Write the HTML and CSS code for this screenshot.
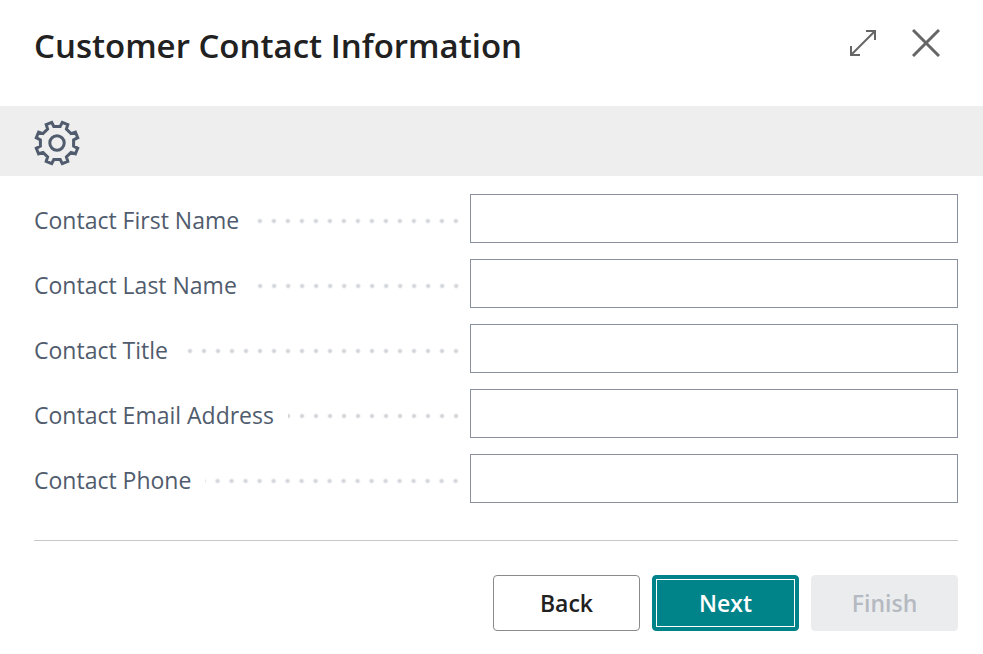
FILE: index.html
```html
<!DOCTYPE html>
<html lang="en">
    <head>
        <meta charset="UTF-8">
        <title>Customer Contact Information</title>
        <link rel="stylesheet" href="styles.css">
    </head>
    <body>
        <header>
            <h1>Customer Contact Information</h1>
            <div class="window-buttons">
                <button type="button" class="icon-button" aria-label="Expand">
                    <svg width="28" height="28" viewBox="0 0 28 28"><path d="M2 26L26 2M17 2H26V11M2 17V26H11"/></svg>
                </button>
                <button type="button" class="icon-button close" aria-label="Close">
                    <svg width="28" height="28" viewBox="0 0 28 28"><path d="M1 1L27 27M27 1L1 27"/></svg>
                </button>
            </div>
        </header>
        <div class="banner">
            <svg class="gear" width="46" height="46" viewBox="-23 -23 46 46">
                <path d="M3.2-16.6L5.3-20.7L10.8-18.4L9.4-14L14-9.4L18.4-10.8L20.7-5.3L16.6-3.2V3.2L20.7 5.3L18.4 10.8L14 9.4L9.4 14L10.8 18.4L5.3 20.7L3.2 16.6H-3.2L-5.3 20.7L-10.8 18.4L-9.4 14L-14 9.4L-18.4 10.8L-20.7 5.3L-16.6 3.2V-3.2L-20.7-5.3L-18.4-10.8L-14-9.4L-9.4-14L-10.8-18.4L-5.3-20.7L-3.2-16.6Z"/>
                <circle r="7.2"/>
            </svg>
        </div>
        <form>
            <div class="field">
                <div class="caption"><label for="first-name">Contact First Name</label><span class="dots"></span></div>
                <input type="text" id="first-name">
            </div>
            <div class="field">
                <div class="caption"><label for="last-name">Contact Last Name</label><span class="dots"></span></div>
                <input type="text" id="last-name">
            </div>
            <div class="field">
                <div class="caption"><label for="title">Contact Title</label><span class="dots"></span></div>
                <input type="text" id="title">
            </div>
            <div class="field">
                <div class="caption"><label for="email">Contact Email Address</label><span class="dots"></span></div>
                <input type="text" id="email">
            </div>
            <div class="field">
                <div class="caption"><label for="phone">Contact Phone</label><span class="dots"></span></div>
                <input type="text" id="phone">
            </div>
        </form>
        <footer>
            <button type="button">Back</button>
            <button type="button" class="primary">Next</button>
            <button type="button" disabled>Finish</button>
        </footer>
    </body>
</html>
```
FILE: styles.css
```css
* {
    box-sizing: border-box;
}
body {
    margin: 0;
    background: #fff;
    color: #212121;
    font-family: "Segoe UI", "Open Sans", "Noto Sans", sans-serif;
    font-size: 23px;
}
header {
    display: flex;
    justify-content: space-between;
    align-items: flex-start;
    padding: 24px 43px 38px 34px;
}
h1 {
    margin: 0;
    font-size: 33px;
    font-weight: 600;
    line-height: 44px;
}
.window-buttons {
    display: flex;
    gap: 35px;
    padding-top: 5px;
}
.icon-button {
    display: block;
    padding: 0;
    border: 0;
    background: none;
}
svg {
    display: block;
    fill: none;
    stroke: #666;
    stroke-width: 2;
}
.close svg {
    stroke-width: 3;
}
.banner {
    padding: 14px 34px 10px;
    background: #eee;
}
.gear {
    stroke: #505c6d;
    stroke-width: 3;
}
form {
    display: flex;
    flex-direction: column;
    gap: 16px;
    margin: 0 25px 0 34px;
    padding: 18px 0 37px;
    border-bottom: 1px solid #c8c8c8;
}
.field {
    display: grid;
    grid-template-columns: 436fr 488fr;
}
.caption {
    display: flex;
    align-items: center;
    gap: 14px;
    padding: 2px 7px 0 0;
    color: #505c6d;
}
label {
    line-height: 32px;
    white-space: nowrap;
}
.dots {
    flex: 1;
    height: 6px;
    margin-top: 2px;
    background: radial-gradient(circle, #d0d3d8 1px, transparent 3px) right center / 14px 6px repeat-x;
}
input {
    width: 100%;
    height: 49px;
    padding: 0 12px;
    border: 1px solid #8a919e;
    border-radius: 0;
    background: #fff;
    font: inherit;
}
footer {
    display: flex;
    justify-content: flex-end;
    gap: 12px;
    padding: 34px 25px 23px;
}
footer button {
    width: 147px;
    height: 56px;
    padding: 0;
    border: 1px solid #8a8a8a;
    border-radius: 4px;
    background: #fff;
    color: #212121;
    font: inherit;
    font-weight: 600;
}
footer .primary {
    border-color: #008489;
    outline: 1px solid #fff;
    outline-offset: -5px;
    background: #008489;
    color: #fff;
}
footer button:disabled {
    border-color: #ebecee;
    background: #ebecee;
    color: #b5b9c1;
}
```
